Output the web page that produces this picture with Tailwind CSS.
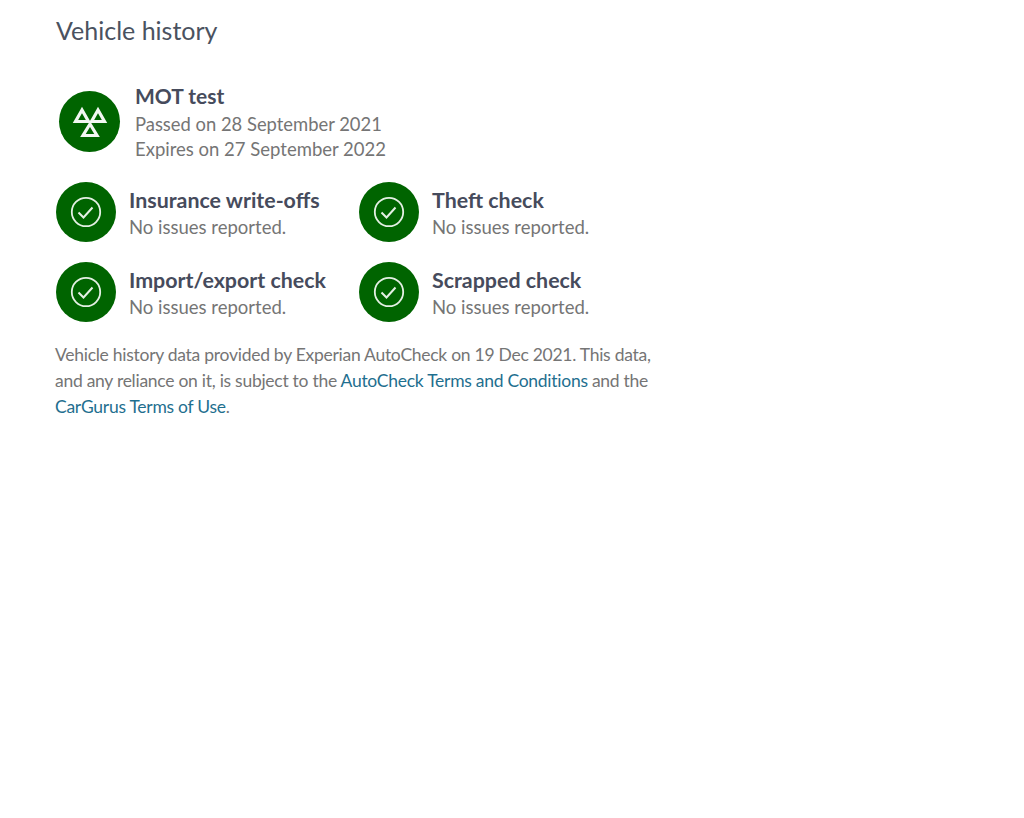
<!DOCTYPE html>
<html lang="en">

<head>
  <meta charset="UTF-8">
  <meta name="viewport" content="width=device-width, initial-scale=1.0">
  <script src="https://cdn.jsdelivr.net/npm/@tailwindcss/browser@4"></script>
  <title>Vehicle history</title>
</head>

<body class="bg-white font-['Lato',sans-serif] text-[#757575]">

  <div class="w-[620px] ml-[56px] pt-[14px]">
    <h2 class="text-[25px] leading-[32px] text-[#4a5260]">Vehicle history</h2>

    <div class="flex mt-[37px] ml-[3px] gap-[15px]">
      <div class="w-[61px] h-[61px] mt-[8px] mb-px rounded-full bg-[#006400] flex items-center justify-center shrink-0">
        <svg width="34" height="30" viewBox="0 0 34 30" fill="none" stroke="#f2f7f2" stroke-width="3.2" class="overflow-visible">
          <path d="M9 3 L2.5 14.5 H15.5 Z" />
          <path d="M25 3 L18.5 14.5 H31.5 Z" />
          <path d="M17 17 L10 28.5 H24 Z" />
        </svg>
      </div>
      <div>
        <div class="text-[21px] leading-[26px] font-bold text-[#464b5c]">MOT test</div>
        <div class="text-[18.4px] leading-[25px] mt-[3px]">Passed on 28 September 2021</div>
        <div class="text-[18.5px] leading-[25px]">Expires on 27 September 2022</div>
      </div>
    </div>

    <div class="grid grid-cols-[303px_1fr] gap-y-[20px] mt-[20px]">
      <div class="flex gap-[13px] items-start">
        <div class="w-[60px] h-[60px] rounded-full bg-[#006400] flex items-center justify-center shrink-0">
          <svg width="32" height="32" viewBox="0 0 32 32" fill="none" stroke="#e4f0e4" stroke-width="1.8">
            <circle cx="16" cy="16" r="14.2" />
            <path d="M8.5 16.5 L13.5 21.5 L22.5 11.5" stroke-width="2" />
          </svg>
        </div>
        <div class="pt-[5px]">
          <div class="text-[21.4px] leading-[26px] font-bold text-[#464b5c]">Insurance write-offs</div>
          <div class="text-[18.5px] leading-[25px] mt-[2px]">No issues reported.</div>
        </div>
      </div>
      <div class="flex gap-[13px] items-start">
        <div class="w-[60px] h-[60px] rounded-full bg-[#006400] flex items-center justify-center shrink-0">
          <svg width="32" height="32" viewBox="0 0 32 32" fill="none" stroke="#e4f0e4" stroke-width="1.8">
            <circle cx="16" cy="16" r="14.2" />
            <path d="M8.5 16.5 L13.5 21.5 L22.5 11.5" stroke-width="2" />
          </svg>
        </div>
        <div class="pt-[5px]">
          <div class="text-[21.4px] leading-[26px] font-bold text-[#464b5c]">Theft check</div>
          <div class="text-[18.5px] leading-[25px] mt-[2px]">No issues reported.</div>
        </div>
      </div>
      <div class="flex gap-[13px] items-start">
        <div class="w-[60px] h-[60px] rounded-full bg-[#006400] flex items-center justify-center shrink-0">
          <svg width="32" height="32" viewBox="0 0 32 32" fill="none" stroke="#e4f0e4" stroke-width="1.8">
            <circle cx="16" cy="16" r="14.2" />
            <path d="M8.5 16.5 L13.5 21.5 L22.5 11.5" stroke-width="2" />
          </svg>
        </div>
        <div class="pt-[5px]">
          <div class="text-[21.4px] leading-[26px] font-bold text-[#464b5c]">Import/export check</div>
          <div class="text-[18.5px] leading-[25px] mt-[2px]">No issues reported.</div>
        </div>
      </div>
      <div class="flex gap-[13px] items-start">
        <div class="w-[60px] h-[60px] rounded-full bg-[#006400] flex items-center justify-center shrink-0">
          <svg width="32" height="32" viewBox="0 0 32 32" fill="none" stroke="#e4f0e4" stroke-width="1.8">
            <circle cx="16" cy="16" r="14.2" />
            <path d="M8.5 16.5 L13.5 21.5 L22.5 11.5" stroke-width="2" />
          </svg>
        </div>
        <div class="pt-[5px]">
          <div class="text-[21.4px] leading-[26px] font-bold text-[#464b5c]">Scrapped check</div>
          <div class="text-[18.5px] leading-[25px] mt-[2px]">No issues reported.</div>
        </div>
      </div>
    </div>

    <p class="text-[17.5px] leading-[26px] tracking-[-0.27px] mt-[20px] -ml-px whitespace-nowrap">
      Vehicle history data provided by Experian AutoCheck on 19 Dec 2021. This data,<br>
      and any reliance on it, is subject to the <a class="text-[#1f6f8f]">AutoCheck Terms and Conditions</a> and the<br>
      <a class="text-[#1f6f8f]">CarGurus Terms of Use</a>.
    </p>
  </div>

</body>

</html>
